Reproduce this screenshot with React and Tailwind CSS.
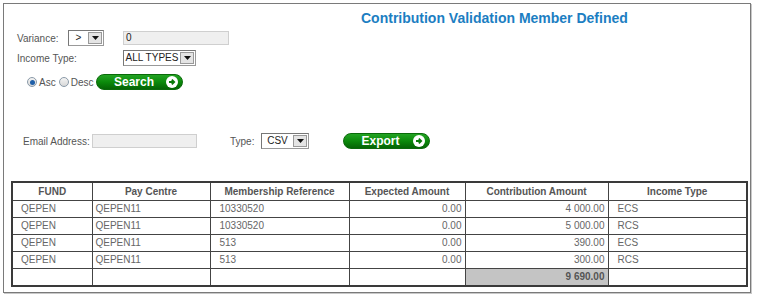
import React from "react";

const rows = [
  ["QEPEN", "QEPEN11", "10330520", "0.00", "4 000.00", "ECS"],
  ["QEPEN", "QEPEN11", "10330520", "0.00", "5 000.00", "RCS"],
  ["QEPEN", "QEPEN11", "513", "0.00", "390.00", "ECS"],
  ["QEPEN", "QEPEN11", "513", "0.00", "300.00", "RCS"],
];

function Select({ value, width }) {
  return (
    <div className={`flex items-center h-[16px] border border-[#999] border-t-[#777] border-l-[#777] bg-white whitespace-nowrap ${width}`}>
      <span className="flex-1 text-center text-[10px] text-[#222] leading-none">{value}</span>
      <span className="w-[14px] h-[12px] mr-[1px] border border-[#999] bg-[#e4e4e4] flex items-center justify-center">
        <svg width="7" height="4" viewBox="0 0 7 4"><path d="M0 0h7L3.5 4z" fill="#111" /></svg>
      </span>
    </div>
  );
}

function GreenButton({ label }) {
  return (
    <div className="relative w-[87px] h-[16px] rounded-full bg-gradient-to-b from-[#22a322] via-[#0b8a0b] to-[#056405] border border-[#0a6a0a] flex items-center">
      <span className="flex-1 pl-[6px] text-center text-white font-bold text-[12px] leading-none pr-[18px]">{label}</span>
      <span className="absolute right-[4px] top-[1px] w-[12px] h-[12px] rounded-full bg-white flex items-center justify-center">
        <svg width="8" height="8" viewBox="0 0 8 8"><path d="M1 4h5M3.8 1.6L6.2 4 3.8 6.4" stroke="#0a7a0a" strokeWidth="1.8" fill="none" /></svg>
      </span>
    </div>
  );
}

function Radio({ checked }) {
  return (
    <span className="w-[10px] h-[10px] rounded-full border border-[#8a9aa8] bg-gradient-to-b from-[#f4f4f4] to-[#d8d8d8] flex items-center justify-center">
      {checked && <span className="w-[5px] h-[5px] rounded-full bg-[#1f5fa8]" />}
    </span>
  );
}

export default function App() {
  return (
    <div className="w-[757px] h-[296px] bg-white font-['Liberation_Sans',Arial,sans-serif] text-[10px] text-[#555] whitespace-nowrap">
      <div className="relative left-[3px] top-[3px] w-[748px] h-[290px] border border-[#7a7a7a] shadow-[1px_1px_0_#c8c8c8]">
        <div className="h-[26px] pl-[357px] pt-[7px] text-[14px] font-bold text-[#1c7ec2] leading-none">
          Contribution Validation Member Defined
        </div>

        <div className="flex items-center h-[16px] pl-[13px]">
          <span className="w-[51px]">Variance:</span>
          <Select value=">" width="w-[36px]" />
          <div className="ml-[19px] w-[106px] h-[14px] bg-[#efefef] border border-[#cfcfcf] text-[10px] text-[#222] pl-[2px] leading-[12px]">0</div>
        </div>

        <div className="flex items-center h-[16px] pl-[13px] mt-[4px]">
          <span className="w-[106px]">Income Type:</span>
          <Select value="ALL TYPES" width="w-[73px]" />
        </div>

        <div className="flex items-center h-[16px] pl-[23px] mt-[8px]">
          <Radio checked />
          <span className="ml-[2px]">Asc</span>
          <span className="ml-[3px]"><Radio /></span>
          <span className="ml-[2px]">Desc</span>
          <span className="ml-[3px]"><GreenButton label="Search" /></span>
        </div>

        <div className="flex items-center h-[16px] pl-[19px] mt-[43px]">
          <span className="w-[69px]">Email Address:</span>
          <div className="w-[105px] h-[14px] bg-[#efefef] border border-[#cfcfcf]" />
          <span className="ml-[33px] w-[31px]">Type:</span>
          <Select value="CSV" width="w-[48px]" />
          <span className="ml-[34px]"><GreenButton label="Export" /></span>
        </div>

        <table className="mt-[32px] ml-[7px] w-[737px] border-collapse border-2 border-[#3a3a3a] text-[10px]">
          <thead>
            <tr className="h-[18px] text-[#555]">
              <th className="w-[80px] border border-[#444] font-bold">FUND</th>
              <th className="w-[118px] border border-[#444] font-bold">Pay Centre</th>
              <th className="w-[139px] border border-[#444] font-bold">Membership Reference</th>
              <th className="w-[116px] border border-[#444] font-bold">Expected Amount</th>
              <th className="w-[143px] border border-[#444] font-bold">Contribution Amount</th>
              <th className="border border-[#444] font-bold">Income Type</th>
            </tr>
          </thead>
          <tbody className="text-[#666]">
            {rows.map((r, i) => (
              <tr key={i} className="h-[17px]">
                <td className="border border-[#444] pl-[8px]">{r[0]}</td>
                <td className="border border-[#444] pl-[3px]">{r[1]}</td>
                <td className="border border-[#444] pl-[9px]">{r[2]}</td>
                <td className="border border-[#444] pr-[3px] text-right">{r[3]}</td>
                <td className="border border-[#444] pr-[3px] text-right">{r[4]}</td>
                <td className="border border-[#444] pl-[9px]">{r[5]}</td>
              </tr>
            ))}
            <tr className="h-[18px]">
              <td className="border border-[#444]" />
              <td className="border border-[#444]" />
              <td className="border border-[#444]" />
              <td className="border border-[#444]" />
              <td className="border border-[#444] bg-[#c4c4c4] pr-[3px] text-right font-bold text-[#555]">9 690.00</td>
              <td className="border border-[#444]" />
            </tr>
          </tbody>
        </table>
      </div>
    </div>
  );
}
